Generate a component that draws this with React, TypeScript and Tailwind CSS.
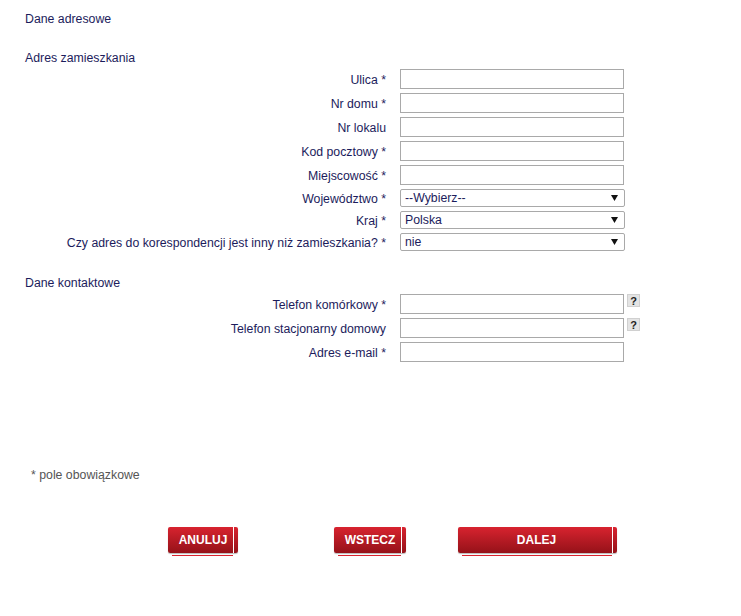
const FONT = "font-['Liberation_Sans',Arial,sans-serif]"

function Label({ children }: { children: React.ReactNode }) {
  return <div className="w-[361px] shrink-0 pt-[2px] text-right text-[12.3px] text-[#1c1c5c]">{children}</div>
}

function InputRow({ label, help }: { label: string; help?: boolean }) {
  return (
    <div className="flex items-center h-[24px]">
      <Label>{label}</Label>
      <input
        type="text"
        className="ml-[14px] w-[224px] h-[20px] bg-white border border-[#a9a9a9] outline-none"
      />
      {help && (
        <span className="ml-[3px] mb-[7px] w-[13px] h-[13px] bg-[#e4e4e4] border border-[#d0d0d0] text-[11px] leading-[12px] font-bold text-center text-[#222]">
          ?
        </span>
      )}
    </div>
  )
}

function SelectRow({ label, value }: { label: string; value: string }) {
  return (
    <div className="flex items-center h-[22px]">
      <Label>{label}</Label>
      <div className="ml-[14px] w-[225px] h-[18px] bg-white border border-[#a9a9a9] rounded-[2px] flex items-center justify-between pl-[4px] pr-[6px] text-[12.3px] text-[#1c1c5c]">
        <span>{value}</span>
        <svg width="7" height="6" viewBox="0 0 7 6">
          <path d="M0 0h7L3.5 6z" fill="#111" />
        </svg>
      </div>
    </div>
  )
}

function RedButton({ label, width, pad }: { label: string; width: string; pad: string }) {
  return (
    <div className={`relative h-[29px] ${width}`}>
      <div className="flex h-[26px] shadow-[0_1px_1px_#bbb] rounded-[2px]">
        <div className={`flex-1 rounded-l-[2px] bg-gradient-to-b from-[#d8232f] to-[#951219] text-white text-[12px] font-bold flex items-center justify-center ${pad}`}>
          {label}
        </div>
        <div className="w-[1px] bg-white" />
        <div className="w-[4px] rounded-r-[2px] bg-gradient-to-b from-[#d8232f] to-[#951219]" />
      </div>
      <div className="absolute left-[4px] right-[5px] bottom-0 h-[1px] bg-[#d8232f]" />
    </div>
  )
}

export default function App() {
  return (
    <div className={`${FONT} w-[741px] h-[616px] bg-white pl-[25px] pt-[12px] text-[12.3px] text-[#1c1c5c]`}>
      <div className="h-[14px] leading-[14px]">Dane adresowe</div>

      <div className="mt-[25px] h-[14px] leading-[14px]">Adres zamieszkania</div>
      <div className="mt-[2px]">
        <InputRow label="Ulica *" />
        <InputRow label="Nr domu *" />
        <InputRow label="Nr lokalu" />
        <InputRow label="Kod pocztowy *" />
        <InputRow label="Miejscowość *" />
        <SelectRow label="Województwo *" value="--Wybierz--" />
        <SelectRow label="Kraj *" value="Polska" />
        <SelectRow label="Czy adres do korespondencji jest inny niż zamieszkania? *" value="nie" />
      </div>

      <div className="mt-[23px] h-[14px] leading-[14px]">Dane kontaktowe</div>
      <div className="mt-[2px]">
        <InputRow label="Telefon komórkowy *" help />
        <InputRow label="Telefon stacjonarny domowy" help />
        <InputRow label="Adres e-mail *" />
      </div>

      <div className="mt-[104px] ml-[6px] h-[14px] leading-[14px] text-[#555]">* pole obowiązkowe</div>

      <div className="mt-[45px] ml-[143px] flex">
        <RedButton label="ANULUJ" width="w-[70px]" pad="pl-[5px]" />
        <div className="w-[96px]" />
        <RedButton label="WSTECZ" width="w-[72px]" pad="pl-[5px]" />
        <div className="w-[52px]" />
        <RedButton label="DALEJ" width="w-[159px]" pad="pl-[3px]" />
      </div>
    </div>
  )
}
